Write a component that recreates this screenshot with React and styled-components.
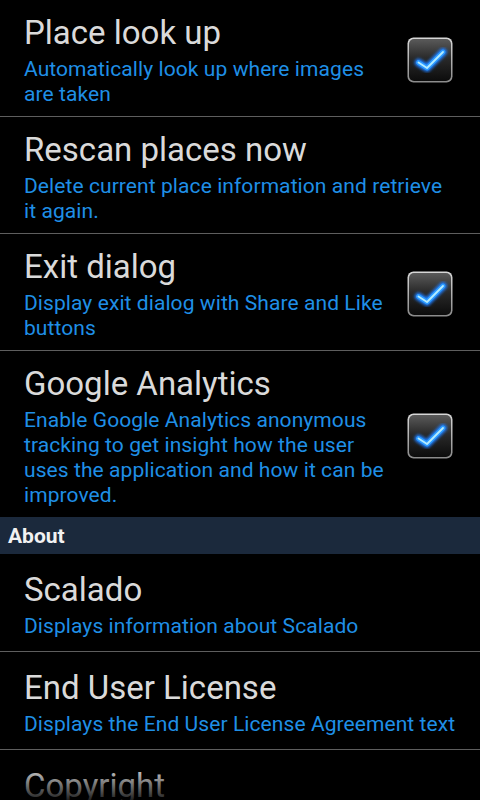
import React from "react";
import styled, { createGlobalStyle } from "styled-components";

const GlobalStyle = createGlobalStyle`
  html, body { margin: 0; padding: 0; background: #000; }
  body { width: 480px; height: 800px; overflow: hidden; font-family: Roboto, "Noto Sans", sans-serif; }
`;

const Screen = styled.div`
  position: relative;
  width: 480px;
  height: 800px;
  overflow: hidden;
  background: #000;
`;

const List = styled.div`
  display: flex;
  flex-direction: column;
`;

const Row = styled.div`
  display: flex;
  align-items: center;
  min-height: ${(p) => (p.$single ? "97px" : "0")};
  padding: ${(p) => (p.$single ? "16px" : "13px")} ${(p) => (p.$check ? "27px" : "24px")}
    ${(p) => (p.$single ? "12px" : "9px")} 24px;
  box-sizing: border-box;
  border-bottom: ${(p) => (p.$last ? "none" : "1px solid #5e5e5e")};
`;

const Texts = styled.div`
  flex: 1;
  display: flex;
  flex-direction: column;
  min-width: 0;
`;

const Title = styled.div`
  font-size: 33px;
  line-height: 39px;
  color: #dadada;
  white-space: nowrap;
`;

const Summary = styled.div`
  margin-top: 5px;
  font-size: 21px;
  line-height: 25px;
  letter-spacing: 0.08px;
  color: #1f8fe6;
`;

const CheckWrap = styled.div`
  flex: none;
  margin-left: 16px;
  width: 46px;
  height: 46px;
`;

const Header = styled.div`
  height: 37px;
  display: flex;
  align-items: center;
  padding-left: 8px;
  background: #1b293c;
  color: #f2f2f2;
  font-weight: bold;
  font-size: 21px;
`;

const Fade = styled.div`
  position: absolute;
  left: 0;
  right: 0;
  bottom: 0;
  height: 34px;
  background: linear-gradient(to bottom, rgba(0,0,0,0), rgba(0,0,0,0.85));
  pointer-events: none;
`;

function CheckBox() {
  return (
    <CheckWrap>
      <svg width="46" height="46" viewBox="0 0 46 46">
        <defs>
          <linearGradient id="cbBorder" x1="0" y1="0" x2="0" y2="1">
            <stop offset="0" stopColor="#d8d8d8" />
            <stop offset="1" stopColor="#8a8a8a" />
          </linearGradient>
          <linearGradient id="cbFill" x1="0" y1="0" x2="0" y2="1">
            <stop offset="0" stopColor="#5a5a5a" />
            <stop offset="0.45" stopColor="#2a2a2a" />
            <stop offset="1" stopColor="#0c0c0c" />
          </linearGradient>
          <filter id="glow" x="-30%" y="-30%" width="160%" height="160%">
            <feGaussianBlur stdDeviation="1.8" />
          </filter>
        </defs>
        <rect x="0.5" y="0.5" width="45" height="45" rx="6" fill="url(#cbBorder)" />
        <rect x="2" y="2" width="42" height="42" rx="5" fill="url(#cbFill)" />
        <path d="M11.5 25.5 L20 31 L36 15" fill="none" stroke="#1a7dff" strokeWidth="7.5" strokeLinecap="round" strokeLinejoin="round" filter="url(#glow)" />
        <path d="M11.5 25.5 L20 31 L36 15" fill="none" stroke="#2d9bff" strokeWidth="4.8" strokeLinecap="round" strokeLinejoin="round" />
        <path d="M11.5 25.5 L20 31 L36 15" fill="none" stroke="#b4ecff" strokeWidth="1.8" strokeLinecap="round" strokeLinejoin="round" />
      </svg>
    </CheckWrap>
  );
}

function Pref({ title, summary, check, single, last }) {
  return (
    <Row $check={check} $single={single} $last={last}>
      <Texts>
        <Title>{title}</Title>
        <Summary>{summary}</Summary>
      </Texts>
      {check && <CheckBox />}
    </Row>
  );
}

export default function App() {
  return (
    <Screen>
      <GlobalStyle />
      <List>
        <Pref title="Place look up" summary="Automatically look up where images are taken" check />
        <Pref title="Rescan places now" summary="Delete current place information and retrieve it again." />
        <Pref title="Exit dialog" summary="Display exit dialog with Share and Like buttons" check />
        <Pref
          title="Google Analytics"
          summary="Enable Google Analytics anonymous tracking to get insight how the user uses the application and how it can be improved."
          check
          last
        />
        <Header>About</Header>
        <Pref title="Scalado" summary="Displays information about Scalado" single />
        <Pref title="End User License" summary="Displays the End User License Agreement text" single />
        <Pref title="Copyright" summary="Copyright information" single />
      </List>
      <Fade />
    </Screen>
  );
}
